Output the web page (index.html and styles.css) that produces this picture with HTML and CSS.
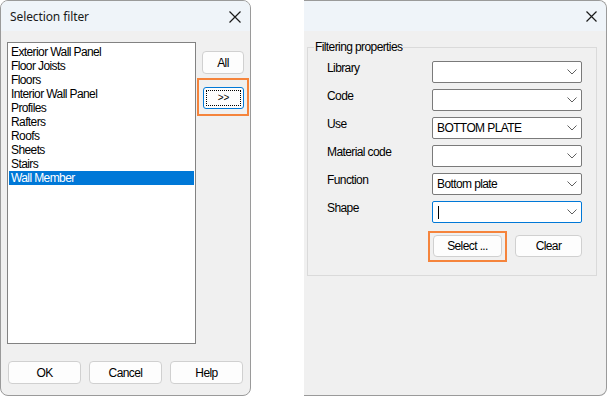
FILE: index.html
```html
<!DOCTYPE html>
<html lang="en">
<head>
    <meta charset="UTF-8">
    <meta name="viewport" content="width=device-width, initial-scale=1.0">
    <title>Selection filter</title>
    <link rel="stylesheet" href="styles.css">
</head>
<body>
    <div class="screen">
        <!-- left dialog: choose element types -->
        <section class="dialog dialog-left">
            <header class="titlebar">
                <span class="title">Selection filter</span>
                <svg class="close" width="12" height="12" viewBox="0 0 12 12">
                    <path d="M0.5 0.5 L11.5 11.5 M11.5 0.5 L0.5 11.5" stroke="#1a1a1a" stroke-width="1.2" fill="none"/>
                </svg>
            </header>
            <div class="dialog-body">
                <div class="picker">
                    <ul class="listbox">
                        <li>Exterior Wall Panel</li>
                        <li>Floor Joists</li>
                        <li>Floors</li>
                        <li>Interior Wall Panel</li>
                        <li>Profiles</li>
                        <li>Rafters</li>
                        <li>Roofs</li>
                        <li>Sheets</li>
                        <li>Stairs</li>
                        <li class="selected">Wall Member</li>
                    </ul>
                    <div class="side-buttons">
                        <button class="btn btn-all">All</button>
                        <span class="callout callout-move">
                            <button class="btn btn-focus"><span class="focus-ring">&gt;&gt;</span></button>
                        </span>
                    </div>
                </div>
                <div class="footer-buttons">
                    <button class="btn btn-footer">OK</button>
                    <button class="btn btn-footer">Cancel</button>
                    <button class="btn btn-footer">Help</button>
                </div>
            </div>
        </section>

        <!-- right dialog: filtering properties -->
        <section class="dialog dialog-right">
            <header class="titlebar">
                <span class="title"></span>
                <svg class="close" width="11" height="11" viewBox="0 0 11 11">
                    <path d="M0.5 0.5 L10.5 10.5 M10.5 0.5 L0.5 10.5" stroke="#1a1a1a" stroke-width="1.2" fill="none"/>
                </svg>
            </header>
            <div class="dialog-body">
                <fieldset class="group">
                    <legend>Filtering properties</legend>
                    <div class="form">
                        <label>Library</label>
                        <div class="combo"><span class="value"></span><svg class="chevron" width="10" height="6" viewBox="0 0 10 6"><path d="M0.5 0.5 L5 5 L9.5 0.5" stroke="#606060" fill="none"/></svg></div>

                        <label>Code</label>
                        <div class="combo"><span class="value"></span><svg class="chevron" width="10" height="6" viewBox="0 0 10 6"><path d="M0.5 0.5 L5 5 L9.5 0.5" stroke="#606060" fill="none"/></svg></div>

                        <label>Use</label>
                        <div class="combo"><span class="value">BOTTOM PLATE</span><svg class="chevron" width="10" height="6" viewBox="0 0 10 6"><path d="M0.5 0.5 L5 5 L9.5 0.5" stroke="#606060" fill="none"/></svg></div>

                        <label>Material code</label>
                        <div class="combo"><span class="value"></span><svg class="chevron" width="10" height="6" viewBox="0 0 10 6"><path d="M0.5 0.5 L5 5 L9.5 0.5" stroke="#606060" fill="none"/></svg></div>

                        <label>Function</label>
                        <div class="combo"><span class="value">Bottom plate</span><svg class="chevron" width="10" height="6" viewBox="0 0 10 6"><path d="M0.5 0.5 L5 5 L9.5 0.5" stroke="#606060" fill="none"/></svg></div>

                        <label>Shape</label>
                        <div class="combo combo-active"><span class="value"><span class="caret"></span></span><svg class="chevron" width="10" height="6" viewBox="0 0 10 6"><path d="M0.5 0.5 L5 5 L9.5 0.5" stroke="#606060" fill="none"/></svg></div>

                        <div class="form-buttons">
                            <span class="callout callout-select">
                                <button class="btn btn-form">Select ...</button>
                            </span>
                            <button class="btn btn-form">Clear</button>
                        </div>
                    </div>
                </fieldset>
            </div>
        </section>
    </div>
</body>
</html>
```

FILE: styles.css
```css
* {
    box-sizing: border-box;
}
body {
    margin: 0;
    background: #ffffff;
    font-family: "Liberation Sans", Arial, sans-serif;
    font-size: 12px;
    letter-spacing: -0.6px;
    color: #000000;
}
.screen {
    display: flex;
    height: 396px;
}
.dialog {
    display: flex;
    flex-direction: column;
    height: 396px;
    background: #f0f0f0;
    border: 1px solid #9a9a9a;
    overflow: hidden;
}
.dialog-left {
    width: 251px;
    border-radius: 8px;
}
.dialog-right {
    width: 303px;
    margin-left: 53px;
    border-left: none;
    border-radius: 0 8px 8px 0;
}
.titlebar {
    display: flex;
    align-items: center;
    justify-content: space-between;
    height: 30px;
    flex: none;
    background: #eff4f9;
}
.title {
    padding-left: 9px;
    padding-top: 1px;
    font-family: "Noto Sans", "Liberation Sans", sans-serif;
    font-size: 12px;
    letter-spacing: -0.1px;
    color: #1a1a1a;
}
.dialog-left .close {
    margin-right: 9px;
    margin-top: 1px;
}
.dialog-right .close {
    margin-right: 9px;
    margin-top: 1px;
}
.dialog-left .dialog-body {
    padding: 11px 0 0 6px;
}

/* list + side buttons */
.picker {
    display: flex;
}
.listbox {
    list-style: none;
    margin: 0;
    padding: 2px 1px;
    width: 189px;
    height: 302px;
    background: #ffffff;
    border: 1px solid #828282;
}
.listbox li {
    height: 14px;
    line-height: 14px;
    padding-left: 2px;
    white-space: nowrap;
}
.listbox li.selected {
    background: #0078d7;
    color: #ffffff;
}
.side-buttons {
    display: flex;
    flex-direction: column;
    align-items: flex-start;
    margin-left: 6px;
    padding-top: 9px;
}
.btn {
    font-family: inherit;
    font-size: 12px;
    letter-spacing: -0.6px;
    color: #000000;
    background: #fdfdfd;
    border: 1px solid #d0d0d0;
    border-radius: 4px;
    padding: 0;
    line-height: 14px;
}
.btn-all {
    width: 42px;
    height: 23px;
}
.callout {
    display: inline-flex;
    border: 2px solid #f5843c;
}
.callout-move {
    margin-top: 4px;
    margin-left: -5px;
    padding: 7px 3px 5px 4px;
}
.btn-focus {
    width: 41px;
    height: 22px;
    border-color: #0078d7;
    border-radius: 3px;
    padding: 2px;
}
.focus-ring {
    display: flex;
    align-items: center;
    justify-content: center;
    height: 100%;
    border: 1px dotted #000000;
    font-size: 10px;
    letter-spacing: -0.2px;
}
.footer-buttons {
    display: flex;
    gap: 8px;
    margin-top: 17px;
    margin-left: 1px;
}
.btn-footer {
    width: 73px;
    height: 23px;
}

/* right dialog form */
.group {
    margin: 9px 0 0 3px;
    width: 290px;
    padding: 0 0 13px 0;
    border: 1px solid #dadada;
    min-width: 0;
}
.group legend {
    margin-left: 6px;
    padding: 0 1px;
    line-height: 14px;
}
.form {
    display: grid;
    grid-template-columns: 105px 150px;
    row-gap: 6px;
    padding: 7px 0 0 19px;
}
.form label {
    line-height: 14px;
    white-space: nowrap;
}
.combo {
    display: flex;
    align-items: center;
    justify-content: space-between;
    height: 22px;
    background: #ffffff;
    border: 1px solid #7a7a7a;
    border-radius: 2px;
    padding: 0 4px 0 4px;
}
.combo-active {
    border-color: #0078d7;
}
.value {
    display: flex;
    align-items: center;
    white-space: nowrap;
}
.caret {
    display: block;
    width: 1px;
    height: 13px;
    margin-left: 1px;
    background: #000000;
}
.form-buttons {
    grid-column: 2;
    display: flex;
    align-items: flex-start;
    gap: 8px;
    margin-top: 2px;
    margin-left: -4px;
}
.callout-select {
    padding: 2px 3px 3px 3px;
}
.btn-form {
    width: 69px;
    height: 22px;
}
.form-buttons > .btn-form {
    margin-top: 4px;
}
```
